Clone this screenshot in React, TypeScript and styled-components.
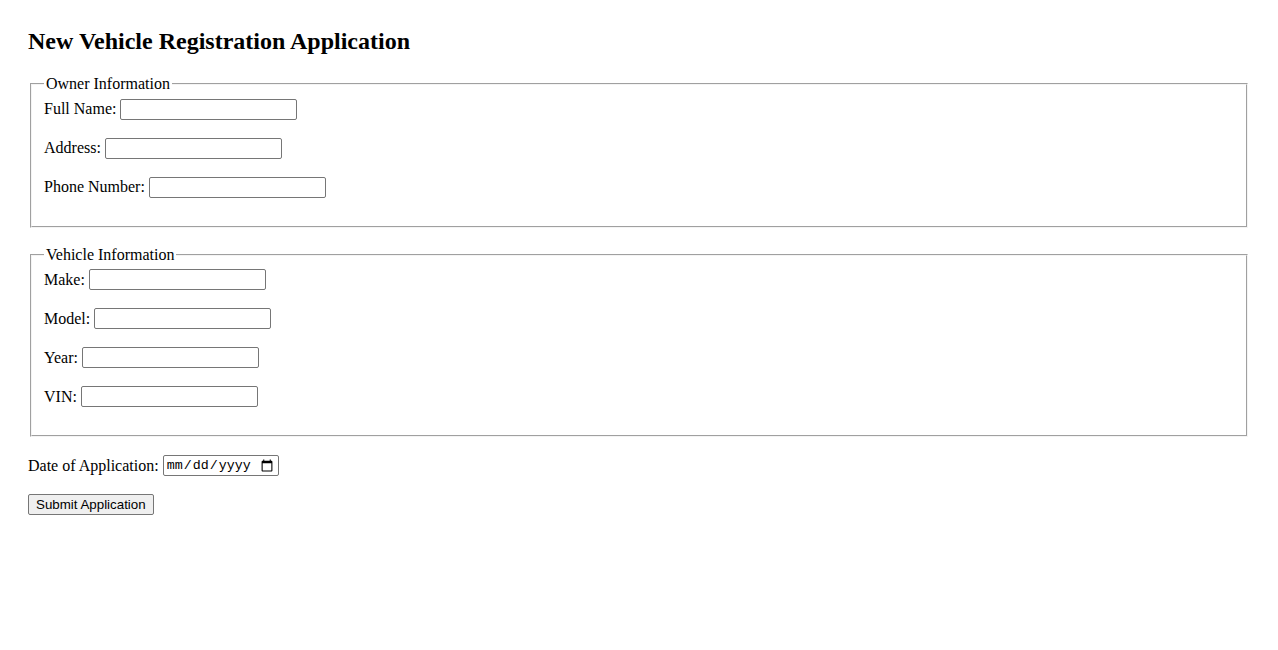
import React from "react";
import styled, { createGlobalStyle } from "styled-components";

const Global = createGlobalStyle`
  html, body { margin: 0; padding: 0; background: #fff; }
  body { font-family: "Liberation Serif", "Times New Roman", serif; font-size: 16px; color: #000; }
`;

const Page = styled.div`
  padding: 28px;
`;

const Title = styled.h2`
  margin: 0 0 19.92px;
  font-size: 24px;
  font-weight: bold;
`;

const Form = styled.form`
  display: flex;
  flex-direction: column;
  align-items: flex-start;
`;

const Section = styled.fieldset`
  align-self: stretch;
  margin: 0 2px 18px;
  padding: 0.35em 0.75em 0.625em;
  border: 2px groove rgb(244, 244, 244);
  min-width: 0;
`;

const Legend = styled.legend`
  padding: 0 2px;
  font-size: 16px;
`;

const Row = styled.div`
  display: flex;
  align-items: center;
  gap: 4px;
  height: 21px;
  margin-bottom: 18px;
`;

const Label = styled.label`
  font-size: 16px;
  white-space: nowrap;
`;

const TextInput = styled.input`
  box-sizing: border-box;
  width: 177px;
  height: 21px;
  padding: 1px 2px;
  border: 1px solid #767676;
  border-radius: 2px;
  font: 13.33px "Liberation Sans", Arial, sans-serif;
  background: #fff;
`;

const DateInput = styled.input`
  box-sizing: border-box;
  width: 116px;
  height: 21px;
  padding: 1px 2px;
  border: 1px solid #767676;
  border-radius: 2px;
  font: 13.33px "Liberation Mono", "Courier New", monospace;
  background: #fff;
`;

const Button = styled.button`
  box-sizing: border-box;
  height: 21px;
  padding: 1px 7px;
  border: 1px solid #767676;
  border-radius: 2px;
  background: #efefef;
  color: #000;
  font: 13.33px "Liberation Sans", Arial, sans-serif;
`;

const ownerFields = ["Full Name:", "Address:", "Phone Number:"];
const vehicleFields = ["Make:", "Model:", "Year:", "VIN:"];

export default function App() {
  return (
    <Page>
      <Global />
      <Title>New Vehicle Registration Application</Title>
      <Form onSubmit={(e) => e.preventDefault()}>
        <Section>
          <Legend>Owner Information</Legend>
          {ownerFields.map((f) => (
            <Row key={f}>
              <Label>{f}</Label>
              <TextInput type="text" />
            </Row>
          ))}
        </Section>
        <Section>
          <Legend>Vehicle Information</Legend>
          {vehicleFields.map((f) => (
            <Row key={f}>
              <Label>{f}</Label>
              <TextInput type="text" />
            </Row>
          ))}
        </Section>
        <Row>
          <Label>Date of Application:</Label>
          <DateInput type="date" />
        </Row>
        <Button type="submit">Submit Application</Button>
      </Form>
    </Page>
  );
}
